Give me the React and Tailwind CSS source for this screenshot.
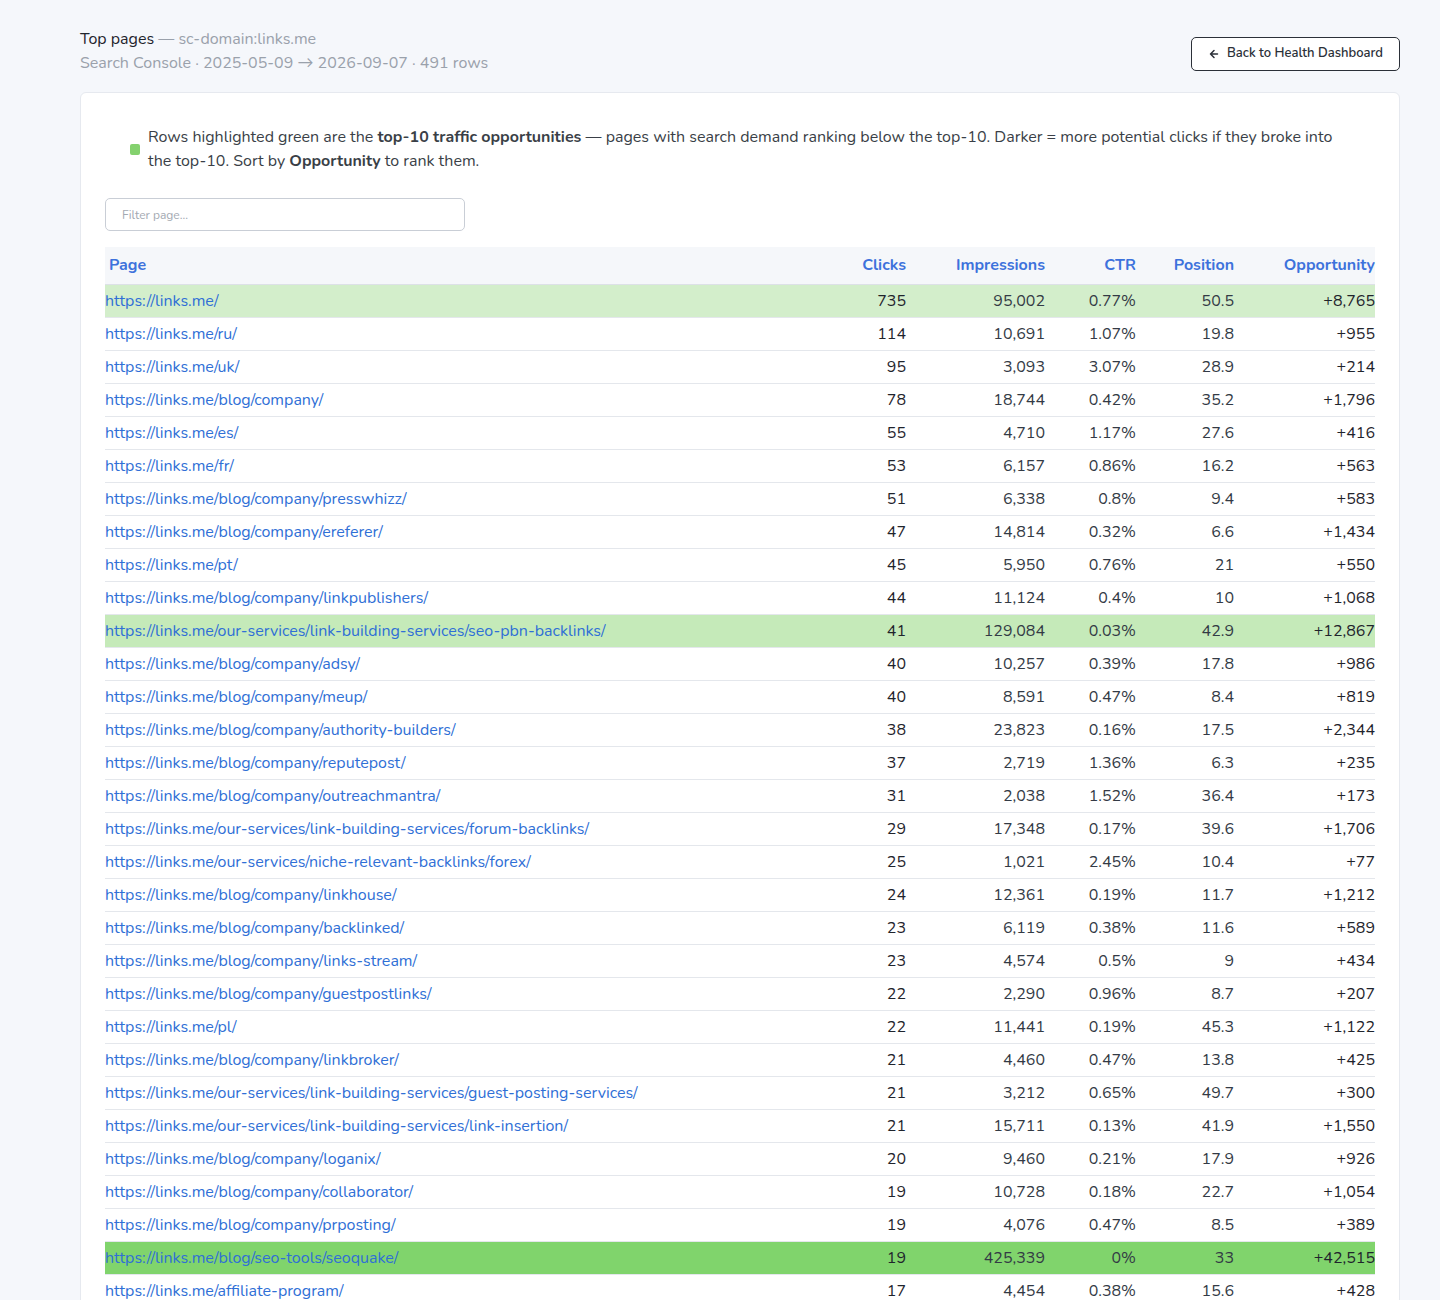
const rows = [
["https://links.me/",735,"95,002","0.77%","50.5","+8,765","bg-[#d3eecb]"],
["https://links.me/ru/",114,"10,691","1.07%","19.8","+955"],
["https://links.me/uk/",95,"3,093","3.07%","28.9","+214"],
["https://links.me/blog/company/",78,"18,744","0.42%","35.2","+1,796"],
["https://links.me/es/",55,"4,710","1.17%","27.6","+416"],
["https://links.me/fr/",53,"6,157","0.86%","16.2","+563"],
["https://links.me/blog/company/presswhizz/",51,"6,338","0.8%","9.4","+583"],
["https://links.me/blog/company/ereferer/",47,"14,814","0.32%","6.6","+1,434"],
["https://links.me/pt/",45,"5,950","0.76%","21","+550"],
["https://links.me/blog/company/linkpublishers/",44,"11,124","0.4%","10","+1,068"],
["https://links.me/our-services/link-building-services/seo-pbn-backlinks/",41,"129,084","0.03%","42.9","+12,867","bg-[#c5eab9]"],
["https://links.me/blog/company/adsy/",40,"10,257","0.39%","17.8","+986"],
["https://links.me/blog/company/meup/",40,"8,591","0.47%","8.4","+819"],
["https://links.me/blog/company/authority-builders/",38,"23,823","0.16%","17.5","+2,344"],
["https://links.me/blog/company/reputepost/",37,"2,719","1.36%","6.3","+235"],
["https://links.me/blog/company/outreachmantra/",31,"2,038","1.52%","36.4","+173"],
["https://links.me/our-services/link-building-services/forum-backlinks/",29,"17,348","0.17%","39.6","+1,706"],
["https://links.me/our-services/niche-relevant-backlinks/forex/",25,"1,021","2.45%","10.4","+77"],
["https://links.me/blog/company/linkhouse/",24,"12,361","0.19%","11.7","+1,212"],
["https://links.me/blog/company/backlinked/",23,"6,119","0.38%","11.6","+589"],
["https://links.me/blog/company/links-stream/",23,"4,574","0.5%","9","+434"],
["https://links.me/blog/company/guestpostlinks/",22,"2,290","0.96%","8.7","+207"],
["https://links.me/pl/",22,"11,441","0.19%","45.3","+1,122"],
["https://links.me/blog/company/linkbroker/",21,"4,460","0.47%","13.8","+425"],
["https://links.me/our-services/link-building-services/guest-posting-services/",21,"3,212","0.65%","49.7","+300"],
["https://links.me/our-services/link-building-services/link-insertion/",21,"15,711","0.13%","41.9","+1,550"],
["https://links.me/blog/company/loganix/",20,"9,460","0.21%","17.9","+926"],
["https://links.me/blog/company/collaborator/",19,"10,728","0.18%","22.7","+1,054"],
["https://links.me/blog/company/prposting/",19,"4,076","0.47%","8.5","+389"],
["https://links.me/blog/seo-tools/seoquake/",19,"425,339","0%","33","+42,515","bg-[#80d46c]"],
["https://links.me/affiliate-program/",17,"4,454","0.38%","15.6","+428"],
];

export default function App() {
  return (
    <div className="min-h-[1300px] bg-[#f5f7fb] pl-[80px] pr-[40px] pt-[27px] text-[#333a45]" style={{fontFamily:'"Nunito","Lato","Noto Sans",sans-serif'}}>
      <div className="flex items-start justify-between">
        <div className="text-[16px] leading-[24px]">
          <div><span className="text-[#1f242c]">Top pages</span> <span className="text-[#9aa1ab]">— sc-domain:links.me</span></div>
          <div className="text-[#9aa1ab]">Search Console · 2025-05-09 → 2026-09-07 · 491 rows</div>
        </div>
        <button className="mt-[10px] flex h-[34px] w-[209px] items-center justify-center gap-[7px] rounded-[5px] border border-[#2b3038] bg-white text-[13px] font-semibold text-[#2b3038]">
          <svg width="12" height="12" viewBox="0 0 24 24" fill="none" stroke="currentColor" strokeWidth="3" strokeLinecap="round" strokeLinejoin="round"><path d="M19 12H5M12 19l-7-7 7-7"/></svg>
          Back to Health Dashboard
        </button>
      </div>
      <div className="mt-[17px] rounded-[6px] border border-[#e6e9ef] bg-white px-[24px] pt-[32px]">
        <div className="flex items-center gap-[8px] pl-[25px] pr-[40px] text-[16px] leading-[24px] text-[#3a3f47]">
          <span className="h-[11px] w-[10px] shrink-0 rounded-[2px] bg-[#84d16e]"></span>
          <p>Rows highlighted green are the <b>top-10 traffic opportunities</b> — pages with search demand ranking below the top-10. Darker = more potential clicks if they broke into the top-10. Sort by <b>Opportunity</b> to rank them.</p>
        </div>
        <input placeholder="Filter page..." className="mt-[25px] h-[33px] w-[360px] rounded-[5px] border border-[#c9ced6] px-[16px] text-[12px] placeholder:text-[#a3a9b2]" />
        <table className="mt-[16px] w-full border-collapse text-[16px]">
          <thead>
            <tr className="h-[37px] border-b border-[#dde1e7] bg-[#f5f7fa] font-bold text-[#3d72dc]">
              <th className="pl-[4px] text-left">Page</th>
              <th className="text-right">Clicks</th>
              <th className="w-[139px] text-right">Impressions</th>
              <th className="w-[91px] text-right">CTR</th>
              <th className="w-[98px] text-right">Position</th>
              <th className="w-[141px] text-right">Opportunity</th>
            </tr>
          </thead>
          <tbody>
            {rows.map((r, i) => (
              <tr key={i} className={`h-[33px] border-b border-[#e4e7ec] ${r[6] || ""}`}>
                <td className="text-[#2f6fd6]">{r[0]}</td>
                <td className="text-right text-[#1f242c]">{r[1]}</td>
                <td className="text-right">{r[2]}</td>
                <td className="text-right">{r[3]}</td>
                <td className="text-right">{r[4]}</td>
                <td className="text-right text-[#1f242c]">{r[5]}</td>
              </tr>
            ))}
          </tbody>
        </table>
      </div>
    </div>
  );
}
